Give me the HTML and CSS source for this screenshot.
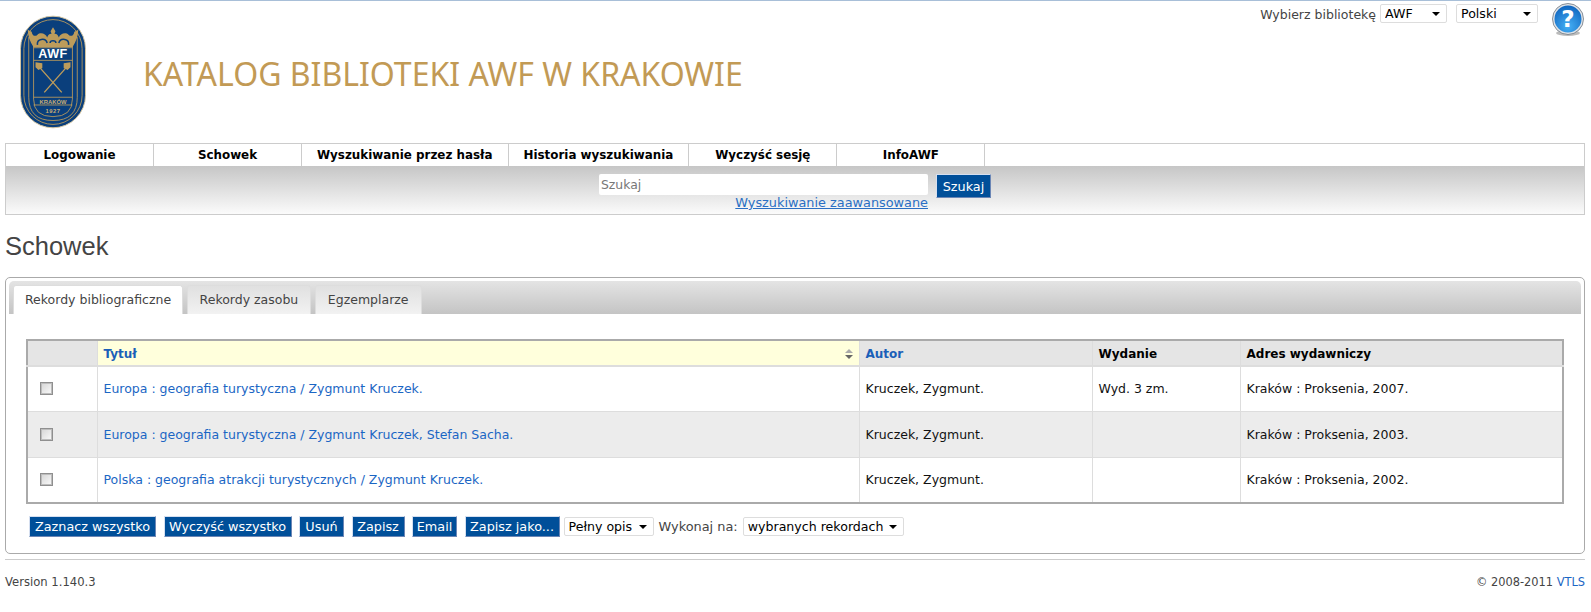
FILE: index.html
```html
<!DOCTYPE html>
<html lang="pl">
<head>
<meta charset="utf-8">
<title>Katalog Biblioteki AWF w Krakowie</title>
<link rel="stylesheet" href="styles.css">
</head>
<body>
<header class="masthead">
  <div class="brand">
    <svg class="logo" viewBox="0 0 68 116" width="66" height="114" aria-label="AWF">
      <rect x="0.5" y="0.5" width="67" height="115" rx="33.5" fill="#0a3f7c" stroke="#d5c5a0"/>
      <rect x="4" y="4" width="60" height="108" rx="30" fill="none" stroke="#b99a5c" stroke-width="0.9"/>
      <path d="M9 22V84Q9 108 34 108Q59 108 59 84V22" fill="none" stroke="#b99a5c" stroke-width="0.9"/>
      <path d="M14 30V86Q14 104 34 104Q54 104 54 86V30" fill="none" stroke="#b99a5c" stroke-width="0.9"/>
      <path d="M34 12l2.500 4-1 2.500c3 0 4 2 4.500 4 1-4 7-6 10-3 2 2 5 2 6-3l4-2c0 6-2 12-6 18H14c-4-6-6-12-6-18l4 2c1 5 4 5 6 3 3-3 9-1 10 3 .5-2 1.500-4 4.500-4l-1-2.500z" fill="#bd9c5b"/>
      <path d="M18 30c-1-6 8-8 10-2M50 30c1-6-8-8-10-2M31 28c0-3 6-3 6 0" fill="none" stroke="#0a3f7c" stroke-width="1.600"/>
      <path d="M14 33H54M14 46H54M14 84H54M14 92H54" stroke="#b99a5c" stroke-width="0.9"/>
      <text x="34" y="44" class="logo-awf">AWF</text>
      <path d="M20 53L43 79M48 53L25 79" stroke="#bd9c5b" stroke-width="1.400"/>
      <path d="M16 48l7 1 0 5-4 2-3-3zM52 48l-7 1 0 5 4 2 3-3z" fill="#bd9c5b"/>
      <text x="34" y="91" class="logo-city">KRAKÓW</text>
      <text x="34" y="100" class="logo-year">1927</text>
    </svg>
    <h1 class="site-title">KATALOG BIBLIOTEKI AWF W KRAKOWIE</h1>
  </div>
  <div class="prefs">
    <span class="prefs-label">Wybierz bibliotekę</span>
    <span class="select-wrap lib"><select class="select"><option>AWF</option></select></span>
    <span class="select-wrap lang"><select class="select"><option>Polski</option></select></span>
    <svg class="help" viewBox="0 0 34 34" width="34" height="34" aria-label="Pomoc">
      <defs>
        <radialGradient id="helpFill" cx="50%" cy="75%" r="75%">
          <stop offset="0" stop-color="#46b0f5"/>
          <stop offset="1" stop-color="#0d62bd"/>
        </radialGradient>
      </defs>
      <ellipse cx="17" cy="30" rx="12" ry="3" fill="#bbb"/>
      <circle cx="17" cy="16" r="14.5" fill="url(#helpFill)" stroke="#dfe3e8" stroke-width="2"/>
      <circle cx="17" cy="16" r="15.5" fill="none" stroke="#6d7680" stroke-width="0.8"/>
      <text x="17" y="24" class="help-mark">?</text>
    </svg>
  </div>
</header>

<nav class="navbox">
  <ul class="menu">
    <li class="menu-item"><a href="#">Logowanie</a></li>
    <li class="menu-item"><a href="#">Schowek</a></li>
    <li class="menu-item"><a href="#">Wyszukiwanie przez hasła</a></li>
    <li class="menu-item"><a href="#">Historia wyszukiwania</a></li>
    <li class="menu-item"><a href="#">Wyczyść sesję</a></li>
    <li class="menu-item"><a href="#">InfoAWF</a></li>
  </ul>
  <div class="searchbar">
    <div class="search-col">
      <input class="search-input" type="text" placeholder="Szukaj">
      <a class="adv-link" href="#">Wyszukiwanie zaawansowane</a>
    </div>
    <button class="btn search-btn">Szukaj</button>
  </div>
</nav>

<h2 class="page-title">Schowek</h2>

<section class="panel">
  <div class="tabbar">
    <a class="tab active" href="#">Rekordy bibliograficzne</a>
    <a class="tab" href="#">Rekordy zasobu</a>
    <a class="tab" href="#">Egzemplarze</a>
  </div>
  <div class="panel-body">
    <table class="results">
      <thead>
        <tr>
          <th class="c-check"></th>
          <th class="c-title sorted"><a href="#">Tytuł</a><span class="sort-arrows"></span></th>
          <th class="c-author"><a href="#">Autor</a></th>
          <th class="c-edition">Wydanie</th>
          <th class="c-pub">Adres wydawniczy</th>
        </tr>
      </thead>
      <tbody>
        <tr>
          <td class="cell-check"><input class="check" type="checkbox"></td>
          <td><a href="#">Europa : geografia turystyczna / Zygmunt Kruczek.</a></td>
          <td>Kruczek, Zygmunt.</td>
          <td>Wyd. 3 zm.</td>
          <td>Kraków : Proksenia, 2007.</td>
        </tr>
        <tr class="alt">
          <td class="cell-check"><input class="check" type="checkbox"></td>
          <td><a href="#">Europa : geografia turystyczna / Zygmunt Kruczek, Stefan Sacha.</a></td>
          <td>Kruczek, Zygmunt.</td>
          <td></td>
          <td>Kraków : Proksenia, 2003.</td>
        </tr>
        <tr>
          <td class="cell-check"><input class="check" type="checkbox"></td>
          <td><a href="#">Polska : geografia atrakcji turystycznych / Zygmunt Kruczek.</a></td>
          <td>Kruczek, Zygmunt.</td>
          <td></td>
          <td>Kraków : Proksenia, 2002.</td>
        </tr>
      </tbody>
    </table>
    <div class="actions">
      <button class="btn b-select">Zaznacz wszystko</button>
      <button class="btn b-clear">Wyczyść wszystko</button>
      <button class="btn b-remove">Usuń</button>
      <button class="btn b-save">Zapisz</button>
      <button class="btn b-email">Email</button>
      <button class="btn b-saveas">Zapisz jako...</button>
      <span class="select-wrap format"><select class="select"><option>Pełny opis</option></select></span>
      <span class="action-label">Wykonaj na:</span>
      <span class="select-wrap scope"><select class="select"><option>wybranych rekordach</option></select></span>
    </div>
  </div>
</section>

<footer class="footer">
  <span class="version">Version 1.140.3</span>
  <span>© 2008-2011 <a href="#">VTLS</a></span>
</footer>
</body>
</html>
```
FILE: styles.css
```css
* { box-sizing: border-box; }
html, body { margin: 0; }
body {
  padding: 0 6px 0 5px;
  border-top: 1px solid #a8bfd8;
  background: #fff;
  color: #444;
  font: 12px "DejaVu Sans", Verdana, sans-serif;
  height: 612px;
  overflow: hidden;
}
a { color: #1b66c4; text-decoration: none; }

.masthead { display: flex; justify-content: space-between; height: 142px; }
.brand { display: flex; align-items: flex-start; padding: 14px 0 0 15px; }
.logo { display: block; flex: none; }
.logo-awf { font: bold 13px "Liberation Sans", sans-serif; fill: #fff; text-anchor: middle; letter-spacing: 0.5px; }
.logo-city { font: bold 6px "Liberation Sans", sans-serif; fill: #c8ad74; text-anchor: middle; }
.logo-year { font: bold 6px "Liberation Sans", sans-serif; fill: #c8ad74; text-anchor: middle; letter-spacing: 0.5px; }
.site-title {
  margin: 39px 0 0 57px;
  color: #c29a55;
  font: 400 32px/40px "Noto Sans", sans-serif;
  white-space: nowrap;
}

.prefs { display: flex; align-items: flex-start; padding: 3px 0 0 0; }
.prefs-label { margin: 3px 4px 0 0; font-size: 12.5px; line-height: 16px; }
.select-wrap { position: relative; display: inline-block; flex: none; height: 19px; }
.select-wrap::after {
  content: "";
  position: absolute;
  right: 7px;
  top: 8px;
  border: 4px solid transparent;
  border-top-color: #000;
  border-bottom: 0;
  pointer-events: none;
}
.select {
  display: block;
  width: 100%;
  height: 19px;
  padding: 0 0 0 4px;
  border: 1px solid #ddd;
  border-radius: 2px;
  appearance: none;
  background: #fff;
  color: #000;
  font: 12.6px/17px "DejaVu Sans", Verdana, sans-serif;
}
.lib { width: 67px; }
.lang { width: 82px; margin-left: 9px; }
.help { display: block; flex: none; margin: -1px 0 0 13px; }
.help-mark { font: bold 23px "DejaVu Sans", sans-serif; fill: #fff; text-anchor: middle; }

.navbox { border: 1px solid #ccc; }
.menu { display: flex; margin: 0; padding: 0; list-style: none; background: #fff; }
.menu-item {
  min-width: 148px;
  padding: 0 15px;
  border-right: 1px solid #ccc;
  font-weight: bold;
  font-size: 11.9px;
  line-height: 22px;
  text-align: center;
  white-space: nowrap;
}
.menu-item a { color: #000; }
.searchbar {
  display: flex;
  justify-content: center;
  align-items: flex-start;
  gap: 8px;
  height: 48px;
  padding: 8px 0 0 0;
  background: linear-gradient(#c6c6c6, #fbfbfb);
}
.search-col { display: flex; flex-direction: column; align-items: flex-end; width: 329px; }
.search-input {
  width: 100%;
  height: 21px;
  padding: 0 2px;
  border: 0;
  border-radius: 2px;
  background: #fff;
  font: 12.4px "DejaVu Sans", Verdana, sans-serif;
}
.search-input::placeholder { color: #777; opacity: 1; }
.adv-link { color: #2a6fc4; text-decoration: underline; font-size: 12.85px; line-height: 15px; }

.btn {
  height: 21px;
  padding: 0;
  border: 1px solid #6b86b5;
  border-top-color: #d5dff0;
  border-left-color: #d5dff0;
  background: #004f99;
  color: #fff;
  font: 12.8px "DejaVu Sans", Verdana, sans-serif;
  white-space: nowrap;
}
.search-btn { height: 24px; width: 55px; }

.page-title {
  margin: 15px 0 15px;
  color: #444;
  font: 400 25.5px/32px "Liberation Sans", sans-serif;
}

.panel { height: 277px; border: 1px solid #aaa; border-radius: 5px; padding: 3px; }
.tabbar {
  display: flex;
  gap: 3.5px;
  height: 33px;
  padding: 4px 0 0 4px;
  border-radius: 5px 5px 0 0;
  background: linear-gradient(#e4e4e4, #c4c4c4);
}
.tab {
  height: 29px;
  padding: 0 12px;
  border: 1px solid #ddd;
  border-bottom: 0;
  border-radius: 3px 3px 0 0;
  background: linear-gradient(#e0e0e0, #f2f2f2);
  color: #444;
  font-size: 12.5px;
  line-height: 28px;
  white-space: nowrap;
}
.tab.active { padding: 0 11px; background: #fff; }

.panel-body { padding: 25px 17px 0 17px; }
.results {
  width: 1538px;
  table-layout: fixed;
  border-collapse: collapse;
  border: 2px solid #aaa;
  color: #111;
  font-size: 12.5px;
}
.results th {
  height: 26px;
  padding: 1px 6px 0;
  background: #e5e5e5;
  border-right: 1px solid #ddd;
  border-bottom: 2px solid #ddd;
  color: #000;
  font-size: 12px;
  font-weight: bold;
  text-align: left;
}
.results th a { color: #1b5fb8; }
.results td {
  height: 46px;
  padding: 0 6px;
  border-right: 1px solid #ddd;
  border-bottom: 1px solid #ddd;
  white-space: nowrap;
}
.results tbody tr:first-child td { height: 45px; }
.results tr:last-child td { border-bottom: 0; }
.results th:last-child, .results td:last-child { border-right: 0; }
.results tr.alt td { background: #ececec; }
.c-check { width: 70px; }
.c-title { width: 762px; }
.c-author { width: 233px; }
.c-edition { width: 148px; }
.results th.sorted { position: relative; background: #ffffdc; }
.sort-arrows {
  position: absolute;
  right: 6px;
  top: 8px;
  width: 8px;
  height: 10px;
}
.sort-arrows::before, .sort-arrows::after {
  content: "";
  position: absolute;
  left: 0;
  border: 4px solid transparent;
}
.sort-arrows::before { top: 0; border-top: 0; border-bottom-color: #aaa; }
.sort-arrows::after { bottom: 0; border-bottom: 0; border-top-color: #666; }
.cell-check { padding-left: 12px !important; }
.check {
  display: block;
  width: 13px;
  height: 13px;
  margin: 0;
  border: 1px solid #8f8f8f;
  appearance: none;
  background: linear-gradient(135deg, #d5d5d5, #fbfbfb);
  outline: 1px solid #bdbdbd;
  outline-offset: -2px;
}

.actions { display: flex; align-items: center; gap: 7.5px; margin-top: 12px; padding-left: 3px; }
.b-select { width: 127px; }
.b-clear { width: 128px; }
.b-remove { width: 45px; }
.b-save { width: 53px; }
.b-email { width: 45px; }
.b-saveas { width: 95px; margin-right: -3.5px; }
.format { width: 90px; }
.action-label { margin: 0 -2.5px; font-size: 12.9px; }
.scope { width: 161px; }

.footer {
  display: flex;
  justify-content: space-between;
  margin-top: 5px;
  padding-top: 15px;
  border-top: 1px solid #ccc;
  font-size: 11.4px;
  line-height: 14px;
}
.version { font-size: 11.6px; }
```
